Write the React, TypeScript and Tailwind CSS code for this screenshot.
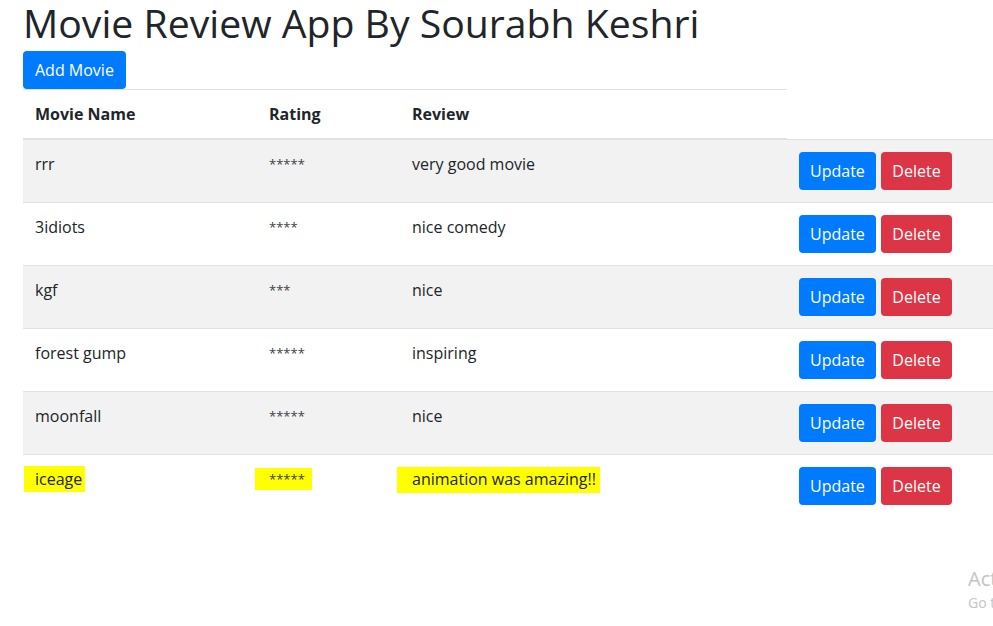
const movies = [
  { name: "rrr", rating: "*****", review: "very good movie" },
  { name: "3idiots", rating: "****", review: "nice comedy" },
  { name: "kgf", rating: "***", review: "nice" },
  { name: "forest gump", rating: "*****", review: "inspiring" },
  { name: "moonfall", rating: "*****", review: "nice" },
  { name: "iceage", rating: "*****", review: "animation was amazing!!", marked: true },
];

function Marker({ children, className }: { children: React.ReactNode; className: string }) {
  return <span className={"bg-[#ffff00] " + className}>{children}</span>;
}

function App() {
  return (
    <div className="relative w-[993px] h-[626px] overflow-hidden bg-white text-[#212529] font-['Open_Sans',sans-serif]">
      <div className="pl-[23px]">
        <h1 className="m-0 h-[51px] text-[39.2px] leading-[46px] font-medium">Movie Review App By Sourabh Keshri</h1>
        <button className="text-white bg-[#007bff] rounded-[4px] px-3 h-[38px] text-base leading-6">Add Movie</button>
        <table className="table-fixed border-collapse w-[1150px] text-base leading-6">
          <colgroup>
            <col className="w-[234px]" />
            <col className="w-[143px]" />
            <col className="w-[387px]" />
            <col className="w-[386px]" />
          </colgroup>
          <thead>
            <tr>
              <th className="text-left font-bold p-3 border-t border-b-2 border-[#dee2e6]">Movie Name</th>
              <th className="text-left font-bold p-3 border-t border-b-2 border-[#dee2e6]">Rating</th>
              <th className="text-left font-bold p-3 border-t border-b-2 border-[#dee2e6]">Review</th>
            </tr>
          </thead>
          <tbody>
            {movies.map((m, i) => (
              <tr key={i} className={i % 2 === 0 ? "bg-[#f2f2f2]" : "bg-white"}>
                <td className="p-3 align-top border-t border-[#dee2e6]">
                  {m.marked ? <Marker className="-ml-[11px] pl-[11px] pr-[3px] py-[2px]">{m.name}</Marker> : m.name}
                </td>
                <td className="p-3 align-top border-t border-[#dee2e6] text-[13px] text-[#3a3f44]">
                  {m.marked ? <Marker className="-ml-[14px] pl-[14px] pr-[7px] py-[2px]">{m.rating}</Marker> : m.rating}
                </td>
                <td className="p-3 align-top border-t border-[#dee2e6]">
                  {m.marked ? <Marker className="-ml-[15px] pl-[15px] pr-[4px] pt-[1px] pb-[3px]">{m.review}</Marker> : m.review}
                </td>
                <td className="p-3 align-top border-t border-[#dee2e6]">
                  <div className="flex gap-[5px]">
                    <button className="text-white bg-[#007bff] rounded-[4px] px-[11px] h-[38px] leading-6">Update</button>
                    <button className="text-white bg-[#dc3545] rounded-[4px] px-[11.5px] h-[38px] leading-6">Delete</button>
                  </div>
                </td>
              </tr>
            ))}
          </tbody>
        </table>
      </div>
      <div className="absolute left-[968px] top-[565px] whitespace-nowrap text-[#c4c4c4]">
        <div className="text-[20px] leading-7">Activate Windows</div>
        <div className="text-[14px] leading-5">Go to Settings to activate Windows.</div>
      </div>
    </div>
  );
}

export default App;
